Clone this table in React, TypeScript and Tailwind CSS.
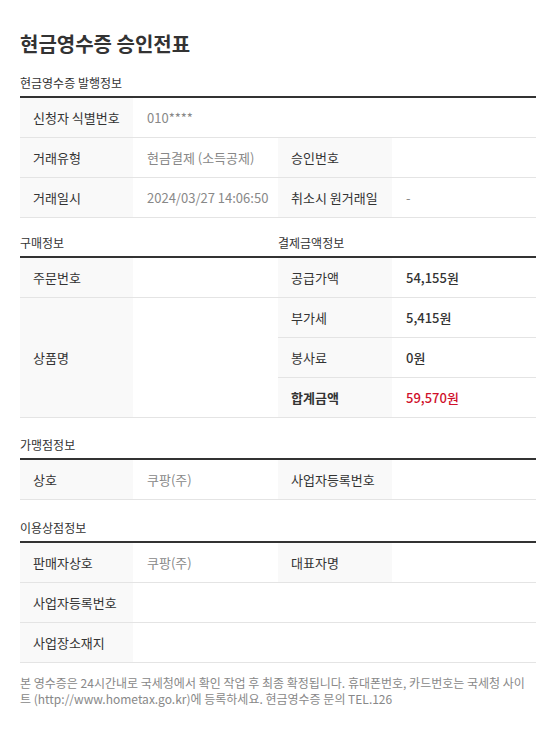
import React from "react";

const font = { fontFamily: "'Noto Sans CJK KR', 'Noto Sans', sans-serif" };

function Label({ children, bold }: { children?: React.ReactNode; bold?: boolean }) {
    return (
        <div className={`bg-[#f9f9f9] flex items-center pl-[13px] text-[13px] text-[#333] ${bold ? "font-bold" : ""}`}>
            {children}
        </div>
    );
}

function Value({ children, dark, red }: { children?: React.ReactNode; dark?: boolean; red?: boolean }) {
    let color = "text-[#888]";
    if (dark) color = "text-[#333] font-medium";
    if (red) color = "text-[#d0102b] font-medium";
    return <div className={`flex items-center pl-[14px] text-[13px] ${color}`}>{children}</div>;
}

function Heading({ children, className = "" }: { children: React.ReactNode; className?: string }) {
    return <div className={`text-[12px] leading-[18px] text-[#333] pb-[4px] ${className}`}>{children}</div>;
}

const row = "grid grid-cols-[113px_145px_114px_1fr] h-[40px] border-b border-[#e4e4e4]";

export default function App() {
    return (
        <div className="bg-white min-h-[744px] px-[20px] pt-[31px] w-[556px]" style={font}>
            <h1 className="text-[20px] leading-[26px] font-bold text-[#333]">현금영수증 승인전표</h1>

            <Heading className="mt-[17px]">현금영수증 발행정보</Heading>
            <div className="border-t-2 border-[#333]">
                <div className={row}>
                    <Label>신청자 식별번호</Label>
                    <Value>010****</Value>
                    <div className="col-span-2" />
                </div>
                <div className={row}>
                    <Label>거래유형</Label>
                    <Value>현금결제 (소득공제)</Value>
                    <Label>승인번호</Label>
                    <Value />
                </div>
                <div className={row}>
                    <Label>거래일시</Label>
                    <Value>2024/03/27 14:06:50</Value>
                    <Label>취소시 원거래일</Label>
                    <Value>-</Value>
                </div>
            </div>

            <div className="grid grid-cols-[258px_1fr] mt-[16px]">
                <Heading>구매정보</Heading>
                <Heading>결제금액정보</Heading>
            </div>
            <div className="border-t-2 border-[#333] grid grid-cols-[113px_145px_114px_1fr] grid-rows-[40px_40px_40px_40px]">
                <div className="col-span-4 grid grid-cols-subgrid border-b border-[#e4e4e4]">
                    <Label>주문번호</Label>
                    <Value />
                    <Label>공급가액</Label>
                    <Value dark>54,155원</Value>
                </div>
                <div className="row-span-3 col-span-2 grid grid-cols-subgrid border-b border-[#e4e4e4]">
                    <Label>상품명</Label>
                    <Value />
                </div>
                <div className="col-span-2 grid grid-cols-subgrid border-b border-[#e4e4e4]">
                    <Label>부가세</Label>
                    <Value dark>5,415원</Value>
                </div>
                <div className="col-span-2 grid grid-cols-subgrid border-b border-[#e4e4e4]">
                    <Label>봉사료</Label>
                    <Value dark>0원</Value>
                </div>
                <div className="col-span-2 grid grid-cols-subgrid border-b border-[#e4e4e4]">
                    <Label bold>합계금액</Label>
                    <Value red>59,570원</Value>
                </div>
            </div>

            <Heading className="mt-[18px]">가맹점정보</Heading>
            <div className="border-t-2 border-[#333]">
                <div className={row}>
                    <Label>상호</Label>
                    <Value>쿠팡(주)</Value>
                    <Label>사업자등록번호</Label>
                    <Value />
                </div>
            </div>

            <Heading className="mt-[19px]">이용상점정보</Heading>
            <div className="border-t-2 border-[#333]">
                <div className={row}>
                    <Label>판매자상호</Label>
                    <Value>쿠팡(주)</Value>
                    <Label>대표자명</Label>
                    <Value />
                </div>
                <div className={row}>
                    <Label>사업자등록번호</Label>
                    <div className="col-span-3" />
                </div>
                <div className={row}>
                    <Label>사업장소재지</Label>
                    <div className="col-span-3" />
                </div>
            </div>

            <p className="mt-[12px] text-[12px] leading-[16px] text-[#888]">
                본 영수증은 24시간내로 국세청에서 확인 작업 후 최종 확정됩니다. 휴대폰번호, 카드번호는 국세청 사이
                <br />트 (http://www.hometax.go.kr)에 등록하세요. 현금영수증 문의 TEL.126
            </p>
        </div>
    );
}
